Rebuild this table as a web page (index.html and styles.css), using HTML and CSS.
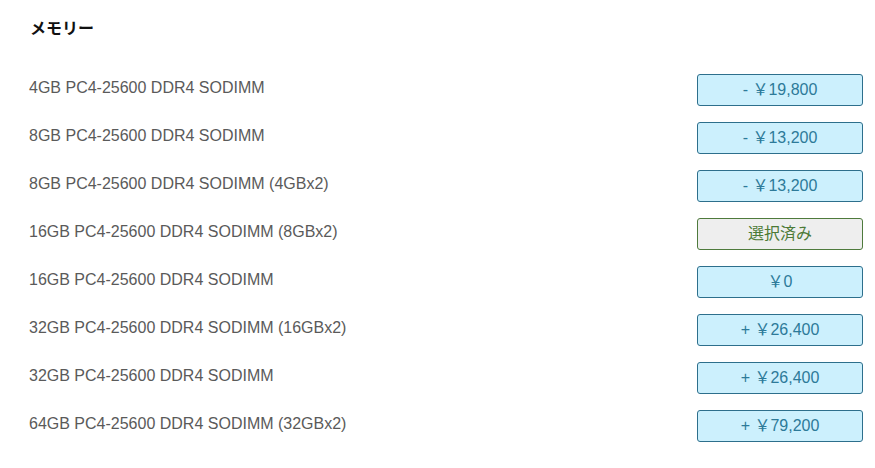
FILE: index.html
```html
<!DOCTYPE html>
<html lang="ja">
<head>
<meta charset="utf-8">
<title>メモリー</title>
<link rel="stylesheet" href="styles.css">
</head>
<body>
<section class="panel">
  <h2 class="title">メモリー</h2>
  <ul class="options">
    <li class="option"><span class="label">4GB PC4-25600 DDR4 SODIMM</span><button class="price">- ￥19,800</button></li>
    <li class="option"><span class="label">8GB PC4-25600 DDR4 SODIMM</span><button class="price">- ￥13,200</button></li>
    <li class="option"><span class="label">8GB PC4-25600 DDR4 SODIMM (4GBx2)</span><button class="price">- ￥13,200</button></li>
    <li class="option"><span class="label">16GB PC4-25600 DDR4 SODIMM (8GBx2)</span><button class="price selected">選択済み</button></li>
    <li class="option"><span class="label">16GB PC4-25600 DDR4 SODIMM</span><button class="price">￥0</button></li>
    <li class="option"><span class="label">32GB PC4-25600 DDR4 SODIMM (16GBx2)</span><button class="price">+ ￥26,400</button></li>
    <li class="option"><span class="label">32GB PC4-25600 DDR4 SODIMM</span><button class="price">+ ￥26,400</button></li>
    <li class="option"><span class="label">64GB PC4-25600 DDR4 SODIMM (32GBx2)</span><button class="price">+ ￥79,200</button></li>
  </ul>
</section>
</body>
</html>
```
FILE: styles.css
```css
html, body {
  margin: 0;
  padding: 0;
  background: #ffffff;
}
body {
  font-family: "Liberation Sans", "Noto Sans CJK JP", sans-serif;
}
.panel {
  padding: 17px 12px 0 29px;
}
.title {
  margin: 0 0 0 1px;
  font-family: "Noto Sans CJK JP", sans-serif;
  font-weight: bold;
  font-size: 16px;
  line-height: 20px;
  color: #111;
}
.options {
  list-style: none;
  margin: 37px 0 0;
  padding: 0;
}
.option {
  display: flex;
  justify-content: space-between;
  align-items: flex-start;
  height: 48px;
}
.label {
  font-size: 16px;
  line-height: 24px;
  padding-top: 2px;
  color: #5a5a5a;
}
.price {
  box-sizing: border-box;
  width: 166px;
  height: 32px;
  padding: 0;
  margin: 0;
  border: 1px solid #2d6f8c;
  border-radius: 3px;
  background: #ccf0fd;
  color: #2d7a99;
  font-family: "Liberation Sans", "Noto Sans CJK JP", sans-serif;
  font-size: 16px;
  line-height: 30px;
  text-align: center;
}
.price.selected {
  background: #eeeeee;
  border-color: #4e7a3c;
  color: #4c7a36;
}
```
